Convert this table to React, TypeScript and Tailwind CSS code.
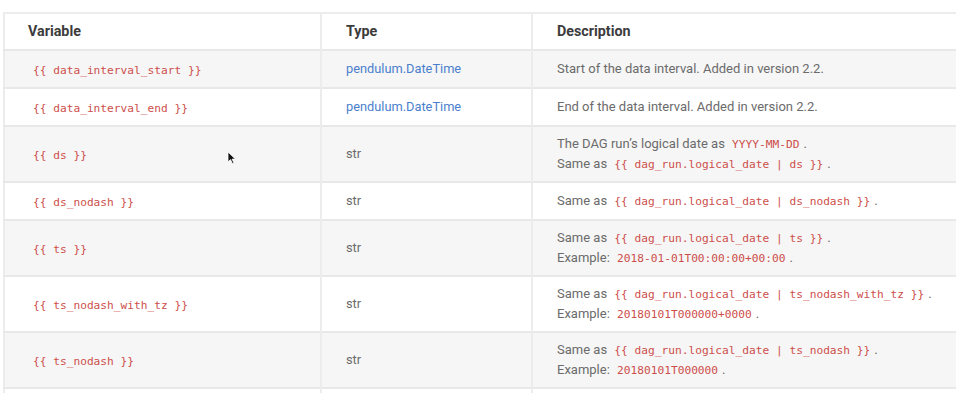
import React from 'react';

type Row = {
  variable: string;
  type: string;
  link?: boolean;
  desc: React.ReactNode;
  shaded: boolean;
};

function Code({ children }: { children: React.ReactNode }) {
  return (
    <code className="px-[4px] font-['DejaVu_Sans_Mono',monospace] text-[11.2px] leading-none text-[#cd4f4b]">
      {children}
    </code>
  );
}

const rows: Row[] = [
  {
    variable: '{{ data_interval_start }}',
    type: 'pendulum.DateTime',
    link: true,
    desc: 'Start of the data interval. Added in version 2.2.',
    shaded: true,
  },
  {
    variable: '{{ data_interval_end }}',
    type: 'pendulum.DateTime',
    link: true,
    desc: 'End of the data interval. Added in version 2.2.',
    shaded: false,
  },
  {
    variable: '{{ ds }}',
    type: 'str',
    desc: (
      <>
        The DAG run’s logical date as <Code>YYYY-MM-DD</Code>.
        <br />
        Same as <Code>{'{{ dag_run.logical_date | ds }}'}</Code>.
      </>
    ),
    shaded: true,
  },
  {
    variable: '{{ ds_nodash }}',
    type: 'str',
    desc: (
      <>
        Same as <Code>{'{{ dag_run.logical_date | ds_nodash }}'}</Code>.
      </>
    ),
    shaded: false,
  },
  {
    variable: '{{ ts }}',
    type: 'str',
    desc: (
      <>
        Same as <Code>{'{{ dag_run.logical_date | ts }}'}</Code>.
        <br />
        Example: <Code>2018-01-01T00:00:00+00:00</Code>.
      </>
    ),
    shaded: true,
  },
  {
    variable: '{{ ts_nodash_with_tz }}',
    type: 'str',
    desc: (
      <>
        Same as <Code>{'{{ dag_run.logical_date | ts_nodash_with_tz }}'}</Code>.
        <br />
        Example: <Code>20180101T000000+0000</Code>.
      </>
    ),
    shaded: false,
  },
  {
    variable: '{{ ts_nodash }}',
    type: 'str',
    desc: (
      <>
        Same as <Code>{'{{ dag_run.logical_date | ts_nodash }}'}</Code>.
        <br />
        Example: <Code>20180101T000000</Code>.
      </>
    ),
    shaded: true,
  },
];

export default function App() {
  return (
    <div className="relative h-[393px] w-[956px] overflow-hidden bg-white pl-[3px] pt-[12px] font-['Roboto',sans-serif]">
      <table className="w-[1000px] table-fixed border-collapse border-t-2 border-l-2 border-[#ececec] text-left">
        <colgroup>
          <col className="w-[317px]" />
          <col className="w-[211px]" />
          <col />
        </colgroup>
        <thead>
          <tr className="h-[37px] border-b-2 border-[#e8e8e8] bg-white text-[14.3px] font-bold text-[#3c3c3c]">
            <th className="border-r-2 border-[#ececec] pl-[23px] font-bold">Variable</th>
            <th className="border-r-2 border-[#ececec] pl-[24px] font-bold">Type</th>
            <th className="pl-[24px] font-bold">Description</th>
          </tr>
        </thead>
        <tbody>
          {rows.map((row) => (
            <tr
              key={row.variable}
              className={`border-b-2 border-[#e8e8e8] ${row.shaded ? 'bg-[#f6f6f6]' : 'bg-white'}`}
            >
              <td className="h-[38px] border-r-2 border-[#ececec] pl-[24px] align-middle leading-[20px]">
                <Code>{row.variable}</Code>
              </td>
              <td
                className={`border-r-2 border-[#ececec] pl-[24px] align-middle text-[12.8px] ${
                  row.link ? 'text-[#4b7fcd]' : 'text-[#6b6b6b]'
                }`}
              >
                {row.type}
              </td>
              <td className="py-[7px] pl-[24px] align-middle text-[13px] leading-[20px] text-[#6b6b6b]">
                {row.desc}
              </td>
            </tr>
          ))}
          <tr className="h-[38px] bg-white">
            <td className="border-r-2 border-[#ececec]" />
            <td className="border-r-2 border-[#ececec]" />
            <td />
          </tr>
        </tbody>
      </table>
      <svg className="absolute left-[227px] top-[151px]" width="10" height="14" viewBox="0 0 10 14">
        <path d="M1 1 L1 11 L3.5 8.6 L5.4 12.6 L6.9 11.9 L5.1 8.1 L8.4 8.1 Z" fill="#111" stroke="#fff" strokeWidth="0.8" />
      </svg>
    </div>
  );
}
